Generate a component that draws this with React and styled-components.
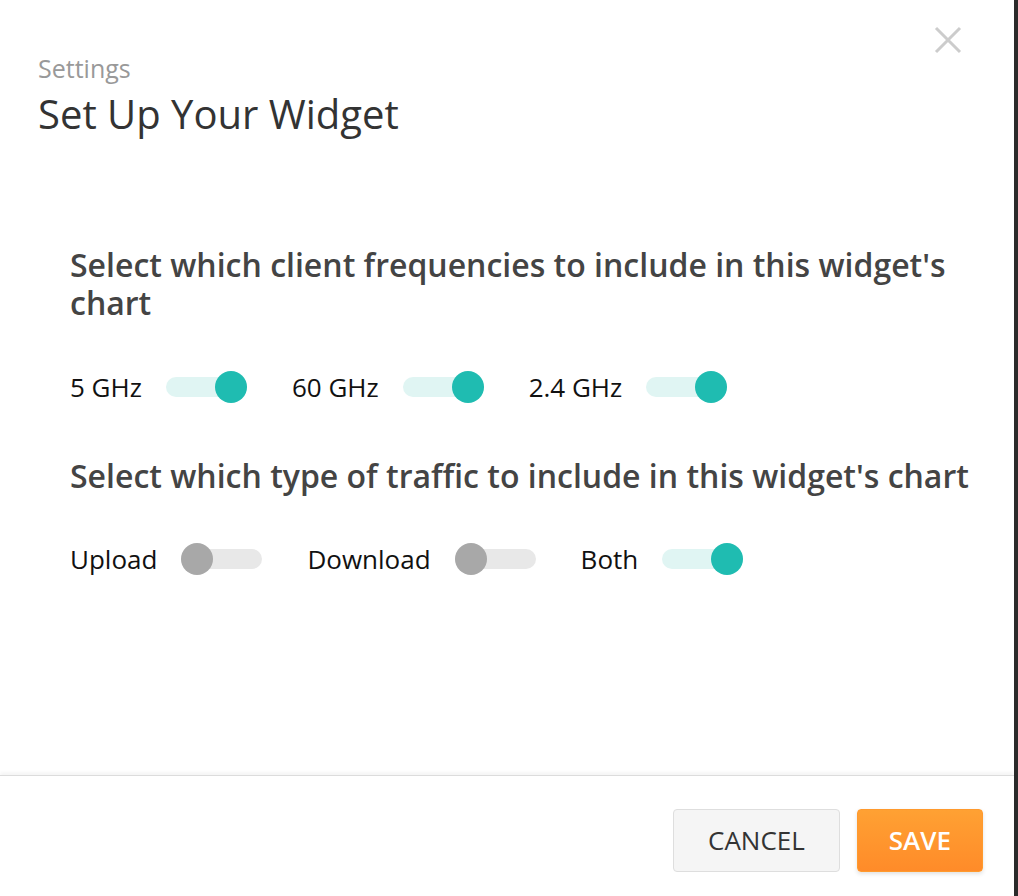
import React, { useState } from 'react';
import styled, { createGlobalStyle } from 'styled-components';

const GlobalStyle = createGlobalStyle`
  html, body {
    margin: 0;
    padding: 0;
    background: #2b2b2b;
  }
  body {
    font-family: "Open Sans", "Liberation Sans", sans-serif;
  }
`;

const Modal = styled.div`
  width: 1014px;
  height: 896px;
  background: #fff;
  display: flex;
  flex-direction: column;
  position: relative;
`;

const Header = styled.div`
  padding: 52px 38px 0;
`;

const Eyebrow = styled.div`
  font-size: 25px;
  line-height: 32px;
  color: #999;
`;

const Title = styled.h1`
  margin: 6px 0 0;
  font-size: 40px;
  line-height: 48px;
  font-weight: 400;
  color: #333;
`;

const CloseButton = styled.button`
  position: absolute;
  top: 26px;
  right: 52px;
  width: 28px;
  height: 28px;
  padding: 0;
  border: none;
  background: none;
  cursor: pointer;
`;

const Body = styled.div`
  flex: 1;
  padding: 108px 40px 0 70px;
`;

const SectionTitle = styled.h2`
  margin: ${(p) => p.$margin || '0'};
  font-size: 32px;
  line-height: 38px;
  font-weight: 600;
  color: #444;
`;

const ToggleRow = styled.div`
  display: flex;
  align-items: center;
  height: 34px;
  margin: ${(p) => p.$margin};
`;

const ToggleItem = styled.label`
  display: flex;
  align-items: center;
  gap: 24px;
  margin-right: 45px;
  font-size: 26px;
  color: #111;
  cursor: pointer;
`;

const Track = styled.span`
  position: relative;
  width: 81px;
  height: 20px;
  border-radius: 10px;
  background: ${(p) => (p.$on ? '#e0f5f3' : '#e8e8e8')};
`;

const Knob = styled.span`
  position: absolute;
  top: -6px;
  left: ${(p) => (p.$on ? '49px' : '0')};
  width: 32px;
  height: 32px;
  border-radius: 50%;
  background: ${(p) => (p.$on ? '#1fbcb1' : '#a8a8a8')};
`;

const Footer = styled.div`
  box-sizing: border-box;
  flex-shrink: 0;
  height: 121px;
  border-top: 1px solid #dcdcdc;
  box-shadow: 0 -3px 3px rgba(0, 0, 0, 0.04);
  display: flex;
  justify-content: flex-end;
  align-items: center;
  gap: 17px;
  padding: 8px 31px 0 0;
`;

const Button = styled.button`
  height: 63px;
  padding: 0 ${(p) => (p.$primary ? '31px' : '34px')};
  border-radius: 4px;
  font-family: "Open Sans", "Liberation Sans", sans-serif;
  font-size: 26px;
  font-weight: ${(p) => (p.$primary ? 600 : 400)};
  cursor: pointer;
  border: 1px solid ${(p) => (p.$primary ? '#ff9a2e' : '#dedede')};
  color: ${(p) => (p.$primary ? '#fff' : '#333')};
  background: ${(p) =>
    p.$primary ? 'linear-gradient(#ffa133, #ff8b29)' : '#f5f5f5'};
  box-shadow: ${(p) => (p.$primary ? '0 2px 4px rgba(0,0,0,0.12)' : 'none')};
`;

const Toggle = ({ label, on, onChange }) => (
  <ToggleItem onClick={onChange}>
    {label}
    <Track $on={on}>
      <Knob $on={on} />
    </Track>
  </ToggleItem>
);

const App = () => {
  const [freq, setFreq] = useState({ '5 GHz': true, '60 GHz': true, '2.4 GHz': true });
  const [traffic, setTraffic] = useState('Both');

  return (
    <>
      <GlobalStyle />
      <Modal>
        <CloseButton aria-label="Close">
          <svg width="28" height="28" viewBox="0 0 28 28">
            <path d="M2 2 L26 26 M26 2 L2 26" stroke="#cccccc" strokeWidth="3" />
          </svg>
        </CloseButton>
        <Header>
          <Eyebrow>Settings</Eyebrow>
          <Title>Set Up Your Widget</Title>
        </Header>
        <Body>
          <SectionTitle>Select which client frequencies to include in this widget's chart</SectionTitle>
          <ToggleRow $margin="48px 0 0">
            {Object.keys(freq).map((k) => (
              <Toggle
                key={k}
                label={k}
                on={freq[k]}
                onChange={() => setFreq({ ...freq, [k]: !freq[k] })}
              />
            ))}
          </ToggleRow>
          <SectionTitle $margin="53px 0 0">
            Select which type of traffic to include in this widget's chart
          </SectionTitle>
          <ToggleRow $margin="47px 0 0">
            {['Upload', 'Download', 'Both'].map((k) => (
              <Toggle key={k} label={k} on={traffic === k} onChange={() => setTraffic(k)} />
            ))}
          </ToggleRow>
        </Body>
        <Footer>
          <Button>CANCEL</Button>
          <Button $primary>SAVE</Button>
        </Footer>
      </Modal>
    </>
  );
};

export default App;
